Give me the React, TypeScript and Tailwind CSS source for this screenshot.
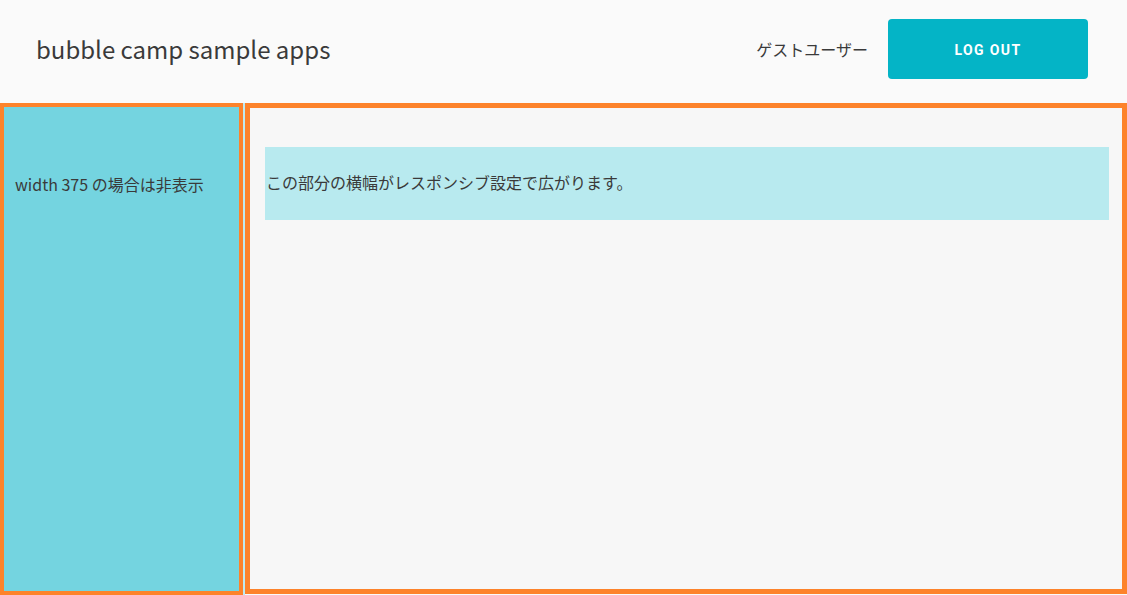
export default function App() {
  const font = { fontFamily: '"Noto Sans CJK JP", "Noto Sans", sans-serif' };

  return (
    <div className="w-[1127px] h-[595px] flex flex-col bg-[#fafafa] text-[#3d3d3d] overflow-hidden" style={font}>
      {/* Header */}
      <header className="h-[103px] flex items-center justify-between pl-[36px] pr-[39px] pb-[6px]">
        <h1 className="text-[24px] leading-none font-normal text-[#3a3a3a]">bubble camp sample apps</h1>
        <div className="flex items-center gap-[20px]">
          <span className="text-[16px] text-[#3a3a3a]">ゲストユーザー</span>
          <button
            className="w-[200px] h-[60px] pt-[3px] rounded-[4px] bg-[#04b4c6] text-white text-[14px] font-bold tracking-[0.1em]"
            style={{ fontFamily: 'Roboto, "Liberation Sans", sans-serif' }}
          >
            LOG OUT
          </button>
        </div>
      </header>

      {/* Body */}
      <div className="flex-1 flex">
        {/* Sidebar */}
        <aside className="w-[243px] h-[492px] border-4 border-[#fd832b] bg-[#74d4e0] pt-[67px] pl-[11px]">
          <p className="text-[16px] leading-[20px] text-[#3a3a3a]">width 375 の場合は非表示</p>
        </aside>
        <div className="w-[2px] bg-[#bfeaf0]" />

        {/* Main */}
        <main className="flex-1 h-[491px] border-[5px] border-[#fd832b] bg-[#f7f7f7] pt-[39px] pl-[15px] pr-[13px]">
          <div className="h-[73px] bg-[#b8eaef] flex items-center pl-[1px] pb-[4px]">
            <p className="text-[16px] text-[#3a3a3a]">この部分の横幅がレスポンシブ設定で広がります。</p>
          </div>
        </main>
      </div>
    </div>
  );
}
